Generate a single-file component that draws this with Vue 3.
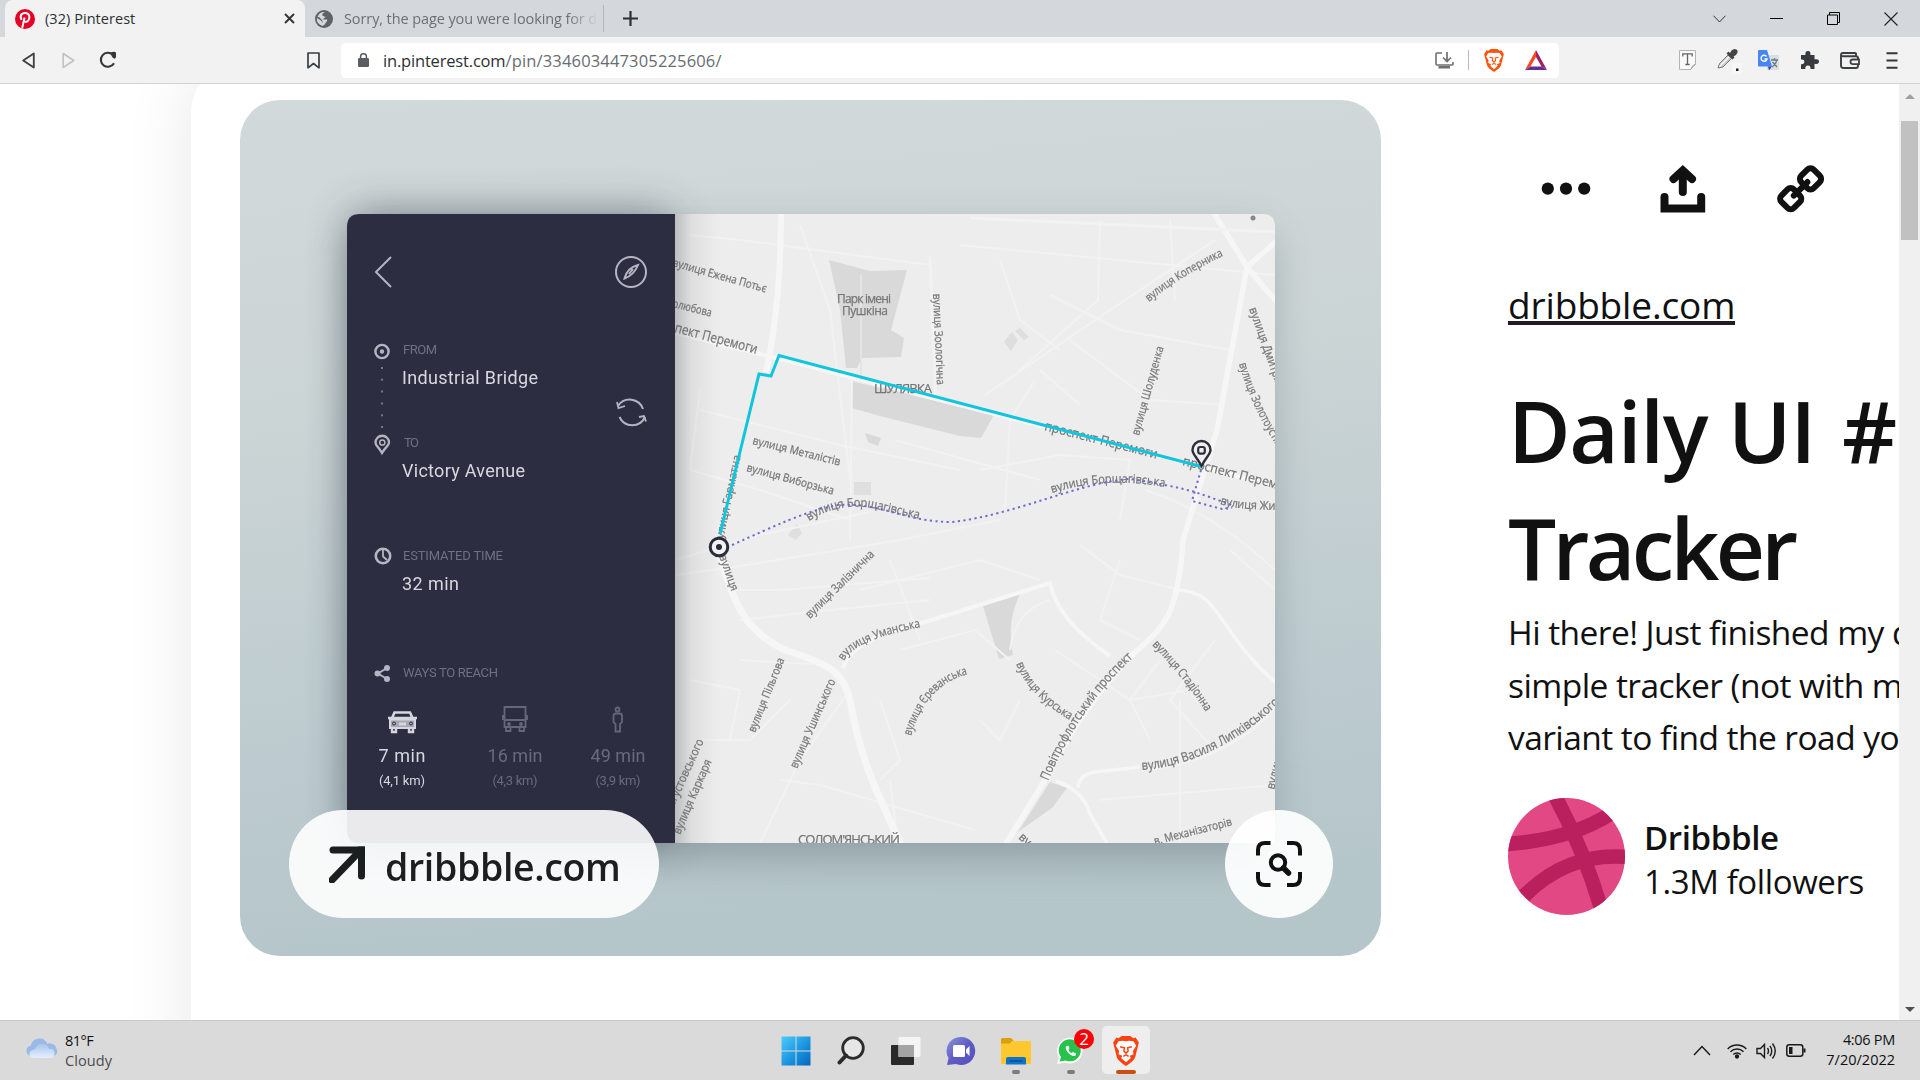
<script setup>
const labels = [
  { t: 'вулиця Ежена Потьє', d: 'M672 266 L767 293', s: 11.5, l: 97 },
  { t: 'олюбова', d: 'M672 307 L712 317', s: 11.5, l: 40 },
  { t: 'пект Перемоги', d: 'M674 332 L757 354', s: 14, l: 85 },
  { t: 'вулиця Зоологічна', d: 'M933 294 L937 386', s: 11.5, l: 91 },
  { t: 'вулиця Металістів', d: 'M752 444 L841 466', s: 11.5, l: 90 },
  { t: 'вулиця Виборзька', d: 'M746 471 L834 495', s: 11.5, l: 90 },
  { t: 'вулиця Борщагівська', d: 'M809 521 Q838 502 872 508 L920 519', s: 12, l: 114 },
  { t: 'вулиця Гарматна', d: 'M722 545 L741 455', s: 11.5, l: 91 },
  { t: 'вулиця', d: 'M719 556 L732 593', s: 11.5, l: 38 },
  { t: 'вулиця Коперника', d: 'M1149 302 Q1180 276 1225 255', s: 11.5, l: 88 },
  { t: 'вулиця Шолуденка', d: 'M1139 436 L1164 346', s: 11.5, l: 92 },
  { t: 'вулиця Дмитрівська', d: 'M1249 309 L1285 410', s: 12, l: 105 },
  { t: 'вулиця Золотоустівська', d: 'M1239 364 Q1252 412 1290 466', s: 12, l: 112 },
  { t: 'проспект Перемоги', d: 'M1044 430 L1158 459', s: 13, l: 116 },
  { t: 'проспект Перемоги', d: 'M1182 465 L1298 494', s: 13, l: 118 },
  { t: 'вулиця Жилянська', d: 'M1220 504 Q1240 512 1320 509', s: 12, l: 98 },
  { t: 'вулиця Борщагівська', d: 'M1052 493 Q1105 476 1165 487', s: 12, l: 114 },
  { t: 'вулиця Залізнична', d: 'M810 619 L876 554', s: 12, l: 91 },
  { t: 'вулиця Уманська', d: 'M844 661 Q854 640 921 627', s: 12, l: 86 },
  { t: 'вулиця Пільгова', d: 'M755 733 L785 659', s: 11.5, l: 79 },
  { t: 'вулиця Ушинського', d: 'M797 769 L836 680', s: 12, l: 96 },
  { t: 'вулиця Єреванська', d: 'M911 736 Q926 684 969 674', s: 12, l: 88 },
  { t: 'Августовського', d: 'M671 813 L704 741', s: 12, l: 79 },
  { t: 'вулиця Каркаря', d: 'M680 835 L712 761', s: 12, l: 80 },
  { t: 'вулиця Курська', d: 'M1016 664 Q1030 697 1070 720', s: 12, l: 79 },
  { t: 'Повітрофлотський проспект', d: 'M1048 781 Q1080 705 1135 656', s: 13, l: 151 },
  { t: 'вулиця Стадіонна', d: 'M1152 645 Q1182 675 1206 712', s: 12, l: 86 },
  { t: 'вулиця Василя Липківського', d: 'M1142 770 Q1215 764 1281 702', s: 13, l: 156 },
  { t: 'в. Механізаторів', d: 'M1155 845 L1233 825', s: 11.5, l: 80 },
  { t: 'вулиця', d: 'M1274 790 L1284 752', s: 12, l: 38 },
  { t: 'вул.', d: 'M1018 838 L1035 854', s: 12, l: 22 },
]

const streets = [
  'M675 560 L760 535 L870 512', 'M675 575 L740 566 L900 540 L1000 520', 'M690 470 L760 490 L850 520',
  'M700 410 L840 445 L960 470', 'M735 590 L780 590 L930 578', 'M800 225 L830 310 L850 480',
  'M690 235 L740 240 L930 265', 'M700 390 L690 470', 'M852 380 L850 540', 'M895 440 L1040 480',
  'M985 395 L1110 310 L1215 240', 'M960 245 L1275 275', 'M1050 295 L1120 330 L1230 350',
  'M1035 380 L1010 420 L1005 510', 'M1000 260 L1020 320 L1060 350', 'M1100 220 L1098 300 L1020 370',
  'M1170 220 L1175 300', 'M980 470 L1060 455 L1130 460 L1120 520', 'M1070 340 L1150 400 L1225 405',
  'M1040 370 L1080 405', 'M1080 545 L1120 575 L1180 590', 'M1145 490 Q1210 510 1275 570',
  'M780 780 L820 785 L975 830', 'M760 843 L800 760 L850 690', 'M700 740 L750 740 L790 700',
  'M740 660 L830 665', 'M900 650 L975 630 L1010 660', 'M880 700 L900 760 L880 780',
  'M1010 650 Q1015 610 1050 600', 'M1020 700 L1000 740 L980 720', 'M1055 650 L1130 700 L1190 690',
  'M1150 740 L1130 700 L1160 660', 'M1180 700 L1180 843', 'M1215 640 L1170 700 L1210 745',
  'M1100 800 L1275 785', 'M1230 550 L1275 590', 'M690 680 L740 690 L730 740', 'M740 620 L830 610 L930 600',
  'M860 590 L980 560 L1040 580', 'M890 560 L920 640', 'M900 860 L890 780', 'M1120 560 L1100 620 L1140 640',
]

const ways = [
  { x: 402, time: '7 min', km: '(4,1 km)', on: true, tw: 47, kw: 46 },
  { x: 515, time: '16 min', km: '(4,3 km)', on: false, tw: 55, kw: 45 },
  { x: 618, time: '49 min', km: '(3,9 km)', on: false, tw: 55, kw: 45 },
]
</script>

<template>
  <div class="screen">
    <header class="tabs">
      <div class="tab active">
        <svg class="fav" viewBox="0 0 20 20"><circle cx="10" cy="10" r="10" fill="#e60023"/><path d="M7.2 18.9 L9.6 8.5 M6.6 10.9 C3.8 5.5 8 3.6 10.8 4 C14.6 4.500 15.200 8.500 13.5 11.300 C12.200 13.500 9.600 13.200 8.900 11.700" fill="none" stroke="#fff" stroke-width="2"/></svg>
        <span class="t1">(32) Pinterest</span>
        <svg class="x" viewBox="0 0 11 11"><path d="M1 1 L10 10 M10 1 L1 10" stroke="#33373b" stroke-width="2"/></svg>
      </div>
      <div class="tab other">
        <svg class="fav2" viewBox="0 0 18 18"><circle cx="9" cy="9" r="9" fill="#5f6368"/><path d="M10 2 C6 4 7 6 9.500 6.500 C12 7 8 8.500 8 9.500 H12 C13 11 11 12 10.500 13 C10 15 8 15.500 7.500 16 A7.300 7.300 0 0 1 1.800 8 L6 10.500 L8 13 L7 10 L4 7 L2.500 7.200 A7.200 7.200 0 0 1 10 2Z" fill="#d4d8dc"/></svg>
        <span class="t2">Sorry, the page you were looking for d</span>
      </div>
      <svg class="plus" viewBox="0 0 15 15"><path d="M7.500 0 V15 M0 7.500 H15" stroke="#2c3034" stroke-width="2.200"/></svg>
      <div class="winctl">
        <i><svg width="13" height="8" viewBox="0 0 13 8"><path d="M.5 .7 L6.500 7 L12.500 .7" fill="none" stroke="#333"/></svg></i>
        <i><svg width="13" height="13" viewBox="0 0 13 13"><path d="M0 6.500 H13" stroke="#000"/></svg></i>
        <i><svg width="13" height="13" viewBox="0 0 13 13"><path d="M.5 3 H10.500 V12.500 H.5Z M2.500 3 V.5 H12.500 V10.500 H10.500" fill="none" stroke="#000"/></svg></i>
        <i><svg width="14" height="14" viewBox="0 0 14 14"><path d="M.5 .5 L13.500 13.500 M13.500 .5 L.5 13.500" stroke="#222" stroke-width="1.100"/></svg></i>
      </div>
    </header>

    <nav class="toolbar">
      <div class="nav">
        <i><svg width="13" height="17" viewBox="0 0 13 17"><path d="M11.800 1.500 V15.500 L1.200 8.500Z" fill="none" stroke="#3b3f43" stroke-width="1.800" stroke-linejoin="round"/></svg></i>
        <i><svg width="13" height="17" viewBox="0 0 13 17"><path d="M1.200 1.500 V15.500 L11.800 8.500Z" fill="none" stroke="#c0c2c4" stroke-width="1.600" stroke-linejoin="round"/></svg></i>
        <i><svg width="18" height="18" viewBox="0 0 18 18"><path d="M15 12.200 A7 7 0 1 1 13.800 3.800" fill="none" stroke="#33373b" stroke-width="2.100"/><path d="M11 1.800 Q16.500 -.5 17 2 V6 Q16 9 13.500 6.500Z" fill="#33373b"/></svg></i>
      </div>
      <svg class="book" viewBox="0 0 13 17"><path d="M1 1 H12 V15.800 L6.500 11.500 L1 15.800Z" fill="none" stroke="#3b3f43" stroke-width="1.700" stroke-linejoin="round"/></svg>
      <div class="url">
        <svg class="lock" viewBox="0 0 11 14"><rect y="5" width="11" height="9" rx="1.200" fill="#5a5e63"/><path d="M2.600 6 V3.500 a2.900 2.700 0 0 1 5.800 0 V6" fill="none" stroke="#5a5e63" stroke-width="1.500"/></svg>
        <span class="addr">in.pinterest.com<b>/pin/334603447305225606/</b></span>
        <svg class="dl" viewBox="0 0 19 17"><path d="M7 1 H1.800 Q1 1 1 2 V12 Q1 13 2 13 H17 Q18 13 18 12 V10" fill="none" stroke="#6d6f72" stroke-width="1.600"/><path d="M3.500 14 H15 V16.500 H3.500Z" fill="#6d6f72"/><path d="M12 0 V8.500 M8 5.500 L12 9.500 L16 5.500" fill="none" stroke="#6d6f72" stroke-width="1.700"/></svg>
        <span class="sep"></span>
        <svg class="brave" viewBox="0 0 24 28"><path d="M5 2 L8 0 H16 L19 2 L21 1.500 L24 6 L23 10 L20.500 20 Q19.500 23 12 28 Q4.500 23 3.500 20 L1 10 L0 6 L3 1.500Z" fill="#fb5410"/><path d="M5 5 L9 4.500 L12 5 L15 4.500 L19 5 L21.500 9 L18.500 14 L19 17 L15.500 18.500 L16.500 20.500 L12 24.500 L7.500 20.500 L8.500 18.500 L5 17 L5.500 14 L2.500 9Z" fill="#fff"/><path d="M6.500 10 L10.500 11 L10 14 L12 16 L14 14 L13.500 11 L17.500 10 M9.500 19 L12 17.500 L14.500 19" fill="none" stroke="#fb5410" stroke-width="1.400"/></svg>
        <svg class="bat" viewBox="0 0 22 20"><path d="M11 0 L0 20 L5.500 16.500 L11 7Z" fill="#ff4724"/><path d="M11 0 L22 20 L16.500 16.500 L11 7Z" fill="#9e1f63"/><path d="M0 20 L5.500 16.500 H16.500 L22 20Z" fill="#662d91"/></svg>
      </div>
      <div class="ext">
        <i><svg width="17" height="20" viewBox="0 0 17 20"><path d="M.5 .5 H16.500 V14 L11.500 19.500 H.5Z" fill="#fafafa" stroke="#b4b4b4"/><path d="M11.500 19.500 Q13 15 16.500 14Z" fill="#ddd" stroke="#999" stroke-width=".6"/><path d="M3.800 6.500 V3.900 H13.200 V6.500 M8.500 3.700 V14.500 M6.300 14.500 H10.700" fill="none" stroke="#666" stroke-width="1.300"/></svg></i>
        <i><svg width="28" height="28" viewBox="0 0 28 28"><path d="M4 22 L5.500 17.500 L14 9 L17.500 12.500 L9 21Z" fill="#ccc" stroke="#777"/><path d="M5.500 20.500 L15 11" stroke="#fff" stroke-width="1.200"/><path d="M12.500 7.500 L18.500 13.500 L20.500 11.500 L19.500 10.500 L22 9 Q25 5.500 22.500 3.500 Q20 2 17.500 4.500 L16 7 L14.500 5.500Z" fill="#444"/><rect x="18" y="17" width="10" height="11" fill="#f7f7f7"/><rect x="22" y="22.500" width="2.500" height="2.500" fill="#222"/></svg></i>
        <i><svg width="21" height="21" viewBox="0 0 21 21"><rect x="9" y="5" width="12" height="15" rx="1" fill="#dcdfe2"/><path d="M13 10 H20 M16.500 8 V10 M14 17 Q18.500 14 18.500 10 M14.500 12 L19 17" fill="none" stroke="#5f7d8c" stroke-width="1.300"/><path d="M1 0 H9 L14 16.500 H1 Q0 16.500 0 15.500 V1 Q0 0 1 0Z" fill="#4786f5"/><path d="M10 16.500 H14 L11 20.500Z" fill="#3949ab"/><path d="M8.500 6.500 A3 3 0 1 0 9 9 H6.500" fill="none" stroke="#fff" stroke-width="1.400"/></svg></i>
        <i><svg width="19" height="19" viewBox="0 0 19 19"><path d="M1 4 H5.500 Q4.800 0 8 0 Q11 0 10.300 4 H14.500 V8.300 Q19 7.500 19 10.500 Q19 13.700 14.500 12.700 V18 H10.500 Q10.800 14.600 8 14.600 Q5 14.600 5.300 18 H1 V13.200 Q4.400 13.500 4.400 10.800 Q4.400 8 1 8.500Z" fill="#363a3f"/></svg></i>
        <i><svg width="20" height="17" viewBox="0 0 20 17"><path d="M16 4 V2 Q16 1 15 1 H3 Q1 1 1 3 V13.500 Q1 16 3.500 16 H16 Q18 16 18 14 V6 Q18 4.200 16 4.200 H3 Q1 4 1 3" fill="none" stroke="#3b3f43" stroke-width="1.900"/><path d="M19 7.500 H13 Q10.500 7.500 10.500 9.800 Q10.500 12.200 13 12.200 H19Z" fill="#f2f2f2" stroke="#3b3f43" stroke-width="1.800"/></svg></i>
        <i><svg width="12" height="17" viewBox="0 0 12 17"><path d="M.5 1.200 H11.500 M.5 8.500 H11.500 M.5 15.700 H11.500" stroke="#33373b" stroke-width="1.900"/></svg></i>
      </div>
    </nav>

    <main class="page">
      <div class="gutter"></div>
      <section class="closeup">
        <div class="picture">
          <svg class="art" width="1141" height="856" viewBox="240 100 1141 856">
            <defs>
              <linearGradient id="bg" x1="0" y1="0" x2=".12" y2="1">
                <stop offset="0" stop-color="#d1d9da"/><stop offset=".35" stop-color="#ccd5d6"/><stop offset=".7" stop-color="#bfccd0"/><stop offset="1" stop-color="#b5c6cb"/>
              </linearGradient>
              <linearGradient id="cast"><stop offset="0" stop-color="#60636b" stop-opacity=".34"/><stop offset=".4" stop-color="#60636b" stop-opacity=".1"/><stop offset="1" stop-color="#60636b" stop-opacity="0"/></linearGradient>
              <filter id="sh" x="-20%" y="-20%" width="140%" height="140%"><feGaussianBlur stdDeviation="20"/></filter>
              <clipPath id="mapclip"><path d="M675 214 H1263 Q1275 214 1275 226 V843 H675Z"/></clipPath>
            </defs>
            <rect x="240" y="100" width="1141" height="856" fill="url(#bg)"/>
            <rect x="350" y="232" width="920" height="626" rx="20" fill="#5b6a70" opacity=".44" filter="url(#sh)"/>
            <rect x="350" y="212" width="322" height="630" rx="16" fill="#3c4652" opacity=".5" filter="url(#sh)"/>
            <g clip-path="url(#mapclip)">
              <rect x="675" y="214" width="600" height="629" fill="#ededed"/>
              <g class="soft">
                <g fill="#d9d9d9">
                  <path d="M829 260 L870 271 L907 270 L891 330 L904 338 L901 357 L862 358 L857 368 L846 368 L840 310Z"/>
                  <path d="M851 381 L880 388 L920 391 L995 413 L981 438 L960 436 L880 416 L852 408Z"/>
                  <path d="M865 433 L881 438 L878 446 L868 442Z"/>
                  <path d="M854 482 h17 v13 h-17Z" opacity=".7"/>
                  <path d="M788 535 L797 524 L802 533 L796 540Z" opacity=".7"/>
                  <path d="M983 606 L1020 594 Q1006 622 1013 655 L999 659Z"/>
                  <path d="M1050 782 L1067 788 L1052 808 L1018 832Z"/>
                  <path d="M1004 342 L1012 332 L1018 340 L1011 351Z M1015 331 L1020 328 L1029 337 L1024 340Z" opacity=".8"/>
                </g>
                <path v-for="(p, i) in streets" :key="i" :d="p" fill="none" stroke="#f2f2f2" stroke-width="2"/>
                <g fill="none" stroke="#f6f6f6" stroke-linejoin="round">
                  <path d="M781 200 Q782 300 766 372" stroke-width="6"/>
                  <path d="M719 552 C735 610 748 632 785 650 C832 665 842 672 850 700 C862 770 882 800 903 850" stroke-width="7"/>
                  <path d="M843 668 Q850 640 925 622 L1050 583 Q1057 620 1110 656" stroke-width="4"/>
                  <path d="M1212 210 L1247 267 L1280 306 M1280 238 L1247 267 L1217 430 L1183 540 C1178 620 1162 628 1132 655 Q1080 710 1045 780 L1005 845" stroke-width="5.500"/>
                  <path d="M1175 590 C1222 590 1215 630 1277 684 M1140 767 L1095 772 Q1078 775 1078 788 M1056 781 Q1083 790 1090 814 L1108 845" stroke-width="3.500"/>
                  <path d="M675 333 L776 358 L1201 467 L1280 487" stroke-width="4"/>
                  <path d="M1280 702 Q1230 762 1142 770 M930 257 L936 400 M970 218 L1275 232" stroke="#f2f2f2" stroke-width="3"/>
                  <path d="M861 275 V380" stroke="#e4e4e4" stroke-width="2"/>
                </g>
                <g class="lbl">
                  <template v-for="(l, i) in labels" :key="i">
                    <path :id="'street' + i" :d="l.d" fill="none" stroke="none"/>
                    <text :font-size="l.s" :textLength="l.l" lengthAdjust="spacingAndGlyphs"><textPath :href="'#street' + i" :textLength="l.l" lengthAdjust="spacingAndGlyphs">{{ l.t }}</textPath></text>
                  </template>
                  <text x="837" y="303" font-size="12" textLength="54">Парк імені</text>
                  <text x="842" y="315" font-size="12" textLength="46">Пушкіна</text>
                  <text x="874" y="393" font-size="13" textLength="58">ШУЛЯВКА</text>
                  <text x="798" y="844" font-size="13" textLength="102">СОЛОМ'ЯНСЬКИЙ</text>
                </g>
                <circle cx="1253" cy="218" r="2.500" fill="#888"/>
              </g>
              <rect x="675" y="214" width="42" height="629" fill="url(#cast)"/>
              <g class="soft">
                <path d="M732 545 C775 526 805 511 838 505 C880 502 905 522 952 522 C1015 515 1080 482 1130 479 Q1165 484 1195 492 L1232 505 M1201 470 L1192 501 L1222 509 L1232 508" fill="none" stroke="#7069cf" stroke-width="2" stroke-dasharray="2.200 3.400"/>
                <path d="M720 534 L759 374 L771 376 L779 355.500 L1201 466.500" fill="none" stroke="#12c5de" stroke-width="3"/>
                <circle cx="719" cy="547" r="8.800" fill="#f2f2f2" stroke="#2b2b3c" stroke-width="3"/><circle cx="719" cy="547" r="3" fill="#2b2b3c"/>
                <path d="M1201.500 466 C1196 456 1192.500 454 1192.500 450 A9 9 0 0 1 1210.500 450 C1210.500 454 1207 456 1201.500 466Z" fill="#efefef" stroke="#2f2f3b" stroke-width="2.400"/><rect x="1198.200" y="447" width="6.600" height="6.600" rx="2" fill="none" stroke="#2f2f3b" stroke-width="2.200"/>
              </g>
            </g>
            <path d="M675 214 H360 Q347 214 347 227 V830 Q347 843 360 843 H675Z" fill="#2d2d41"/>
            <g class="soft" fill="none" stroke="#b5b5c2" stroke-width="2">
              <path d="M391 257 L376 272 L391 287"/>
              <circle cx="631" cy="272" r="15"/><path d="M638 265 Q634 275 624.500 278.500 Q627 268 638 265Z M629 274 L633 269"/>
              <circle cx="382" cy="351.500" r="6.600" stroke-width="2.400"/><circle cx="382" cy="351.500" r="1.200" fill="#b5b5c2"/>
              <path d="M382 367 V430" stroke="#77778a" stroke-dasharray="2 9.800"/>
              <path d="M382 453 C378 446 375.500 446 375.500 442.500 A6.700 6.700 0 0 1 389 442.500 C389 446 386 446 382 453Z" stroke-width="2.300"/><circle cx="382.300" cy="442.500" r="2.600" stroke-width="1.500"/>
              <path d="M618 406 A14 14 0 0 1 643 409 M645 417 A14 14 0 0 1 619.500 417"/>
              <path d="M617 402 L618.500 408 L625 406 M639 417 L644 416 L646 421.500" stroke-width="1.800"/>
              <circle cx="383" cy="556" r="7.200" stroke-width="2.600"/><path d="M383 550 V556.500 L387 560" stroke-width="1.800"/>
              <path d="M387 668 L378 673.500 L387 679"/><g fill="#b5b5c2" stroke="none"><circle cx="387" cy="668" r="3"/><circle cx="377.500" cy="673.500" r="3"/><circle cx="387" cy="679" r="3"/></g>
            </g>
            <g class="soft panel">
              <text class="cap" x="403" y="354" textLength="34">FROM</text>
              <text class="val" x="402" y="384" textLength="136">Industrial Bridge</text>
              <text class="cap" x="404" y="446.500" textLength="15">TO</text>
              <text class="val" x="402" y="477" textLength="123">Victory Avenue</text>
              <text class="cap" x="403" y="560" textLength="100">ESTIMATED TIME</text>
              <text class="val" x="402" y="590" textLength="57">32 min</text>
              <text class="cap" x="403" y="677" textLength="95">WAYS TO REACH</text>
              <g fill="none" stroke="#d6d6de" stroke-width="2">
                <path d="M392 718 L394.500 712.500 H410 L412.500 718 M388 718 H417" stroke-width="2.600"/>
                <path d="M390 719.500 H415 V728 H390Z" fill="#a6a6b4"/><path d="M392 729 V732 H396 V729 M409 729 V732 H413 V729" stroke-width="2.400"/><circle cx="394" cy="723.500" r="1.500" stroke="#2d2d41" stroke-width="1"/><circle cx="411" cy="723.500" r="1.500" stroke="#2d2d41" stroke-width="1"/><path d="M399 724 H406" stroke-width="3"/>
              </g>
              <g fill="none" stroke="#66667a" stroke-width="1.800">
                <path d="M504.500 707 H525.500 V727 H504.500Z M504.500 720 H525.500 M503 715 V720 M527 715 V720 M506 728 V731 H510.500 V728 M519.500 728 V731 H524 V728"/><circle cx="509" cy="724" r="1"/><circle cx="521" cy="724" r="1"/>
                <circle cx="617.500" cy="709.500" r="2"/><path d="M613.500 716 Q613.500 713.500 616 713.500 H619.500 Q622 713.500 622 716 V722 L620 724 V731.500 H615.500 V724 L613.500 722Z"/>
              </g>
              <g v-for="w in ways" :key="w.time" :class="{ dim: !w.on }" text-anchor="middle">
                <text class="val" :x="w.x" y="762" :textLength="w.tw">{{ w.time }}</text>
                <text class="km" :x="w.x" y="785" :textLength="w.kw">{{ w.km }}</text>
              </g>
            </g>
          </svg>
          <div class="pill">
            <svg width="37" height="37" viewBox="0 0 37 37"><path d="M3 34 L30 6 M4 4 H32.500 V30" fill="none" stroke="#1c1f1f" stroke-width="7" stroke-linecap="round"/><path d="M29 .5 H36 V8Z" fill="#1c1f1f"/></svg>
            <span>dribbble.com</span>
          </div>
          <div class="lens">
            <svg width="46" height="46" viewBox="0 0 46 46" fill="none" stroke="#111"><path d="M2 14.500 V9 Q2 2 9 2 H14.500 M31 2 H37 Q44 2 44 9 V14.500 M44 31 V37 Q44 44 37 44 H31 M14.500 44 H9 Q2 44 2 37 V31" stroke-width="4"/><circle cx="22" cy="21.500" r="7.200" stroke-width="4"/><path d="M27.500 27 L32.500 32" stroke-width="5.500" stroke-linecap="round"/></svg>
          </div>
        </div>

        <aside class="info">
          <div class="actions">
            <svg width="50" height="50" viewBox="0 0 50 50"><g fill="#111"><circle cx="6.800" cy="24.600" r="6.100"/><circle cx="25" cy="24.600" r="6.100"/><circle cx="43.200" cy="24.600" r="6.100"/></g></svg>
            <svg width="46" height="50" viewBox="0 0 46 50" fill="none" stroke="#111" stroke-width="8" stroke-linecap="round" stroke-linejoin="round"><path d="M4.500 33 V44.500 H41.200 V33" stroke-linejoin="miter"/><path d="M22.800 8 V28" /><path d="M13.500 15 L22.800 6.500 L32 15" stroke-linejoin="miter"/></svg>
            <svg width="50" height="50" viewBox="0 0 50 50" fill="none" stroke="#111"><g transform="rotate(-45 24.600 24.800)" stroke-width="6"><rect x="1.800" y="16" width="17.600" height="17.600" rx="4.500"/><rect x="29.800" y="16" width="17.600" height="17.600" rx="4.500"/><path d="M15 24.800 H34.200" stroke-width="6" stroke-linecap="round"/></g></svg>
          </div>
          <a class="link"><span>dribbble.com</span></a>
          <h1>Daily UI <span>#020</span><br><em>Tracker</em></h1>
          <p><span>Hi there! Just finished my d</span><br><span>simple tracker (not with m</span><br><span>variant to find the road you</span></p>
          <div class="author">
            <svg width="117" height="117" viewBox="0 0 117 117"><defs><clipPath id="av"><circle cx="58.500" cy="58.500" r="58.500"/></clipPath></defs><g clip-path="url(#av)"><rect width="117" height="117" fill="#e24884"/><path d="M46 -4 Q75 50 93 110 M-2 46 Q62 42 104 15 M16 98 Q60 54 119 59" fill="none" stroke="#ba1f5e" stroke-width="14.500"/></g></svg>
            <div><b>Dribbble</b><span>1.3M followers</span></div>
          </div>
        </aside>
      </section>
      <div class="scroll">
        <svg width="10" height="5" viewBox="0 0 10 5"><path d="M0 5 L5 0 L10 5Z" fill="#a0a0a0"/></svg>
        <div class="thumb"></div>
        <svg class="down" width="10" height="5" viewBox="0 0 10 5"><path d="M0 0 H10 L5 5Z" fill="#505050"/></svg>
      </div>
    </main>

    <footer class="taskbar">
      <div class="weather">
        <svg width="32" height="24" viewBox="0 0 32 24"><defs><linearGradient id="cl" x1="0" y1="0" x2="0" y2="1"><stop offset="0" stop-color="#a9c4ec"/><stop offset="1" stop-color="#e4efff"/></linearGradient></defs><path d="M7 20 Q0 20 .5 14 Q1 10 5 9.500 Q6 3 13 2.500 Q19 2 21.500 8 Q23 6.500 26.500 8 Q30 9 30 12 Q32 14 31 17 Q30 20 26 20Z" fill="#9bb9e6"/><path d="M9 22 Q3 22 3.500 17 Q5 13 9 13.500 Q11 7 17 8 Q22 8.500 23 13 Q28 12 28.500 17 Q28.500 22 24 22Z" fill="url(#cl)"/></svg>
        <div><span>81°F</span><span class="c">Cloudy</span></div>
      </div>
      <div class="apps">
        <i><svg width="30" height="30" viewBox="0 0 30 30"><defs><linearGradient id="w" x1="0" y1="0" x2="1" y2="1"><stop offset="0" stop-color="#4ccdfd"/><stop offset=".6" stop-color="#168fdc"/><stop offset="1" stop-color="#0567bd"/></linearGradient></defs><path d="M.5 .5 H14.500 V14.500 H.5Z M15.500 .5 H29.500 V14.500 H15.500Z M.5 15.500 H14.500 V29.500 H.5Z M15.500 15.500 H29.500 V29.500 H15.500Z" fill="url(#w)"/></svg></i>
        <i><svg width="28" height="30" viewBox="0 0 28 30"><circle cx="16" cy="12" r="10.300" fill="#e6e6e6" stroke="#2b2b2b" stroke-width="2.800"/><path d="M9 19.500 L2.500 26.500" stroke="#2b2b2b" stroke-width="4" stroke-linecap="round"/></svg></i>
        <i><svg width="30" height="30" viewBox="0 0 30 30"><rect y="9" width="23" height="20" rx="1" fill="#2a2a2a"/><rect x="7.500" y="1" width="22" height="20" rx="1" fill="#f5f5f5" opacity=".95"/><rect x="7.500" y="9" width="15.500" height="12" fill="#a4a4a4"/></svg></i>
        <i><svg width="30" height="30" viewBox="0 0 30 30"><defs><linearGradient id="tm" x1="0" y1="0" x2="1" y2="1"><stop offset="0" stop-color="#8a93d8"/><stop offset=".5" stop-color="#5f5cc4"/><stop offset="1" stop-color="#5350bf"/></linearGradient></defs><path d="M15 1 A14 14 0 1 1 10 28 L1 29 L2.500 22 A14 14 0 0 1 15 1Z" fill="url(#tm)"/><rect x="7" y="9" width="12" height="12" rx="1.500" fill="#fff"/><path d="M20 13.500 L23.500 10 V20 L20 16.500Z" fill="#fff"/></svg></i>
        <i><svg width="30" height="30" viewBox="0 0 30 30"><path d="M0 3.500 Q0 2 1.500 2 H10 L13 5 H11 L9 8 H0Z" fill="#dd9f08"/><path d="M0 7.500 H9 L12 5 H29 Q30 5 30 6 V28 H0Z" fill="#fdc82f"/><path d="M5 28.500 V23 Q5 21 7 21 H23 Q25 21 25 23 V28.500Z" fill="#1272c9"/><path d="M8.500 25 H21.500" stroke="#0b4f96" stroke-width="1.500"/></svg><u></u></i>
        <i><svg width="40" height="40" viewBox="0 0 40 40"><path d="M6 33 L8 26.500 A12.800 12.800 0 1 1 14 31.500Z" fill="#fff"/><path d="M8.500 30.500 L10 26 A11 11 0 1 1 14.500 29.500Z" fill="#26c24b"/><path d="M15 15.500 Q14 17.500 16.500 21 Q20 25.500 24 25 Q25.500 23.500 25 22.500 L22 21 L20.500 22 Q18 21 17.500 18.500 L18.500 17.500 L17.500 14.500Z" fill="#fff"/></svg><em>2</em><u></u></i>
        <i class="on"><svg width="26" height="30" viewBox="0 0 24 28"><path d="M5 2 L8 0 H16 L19 2 L21 1.500 L24 6 L23 10 L20.500 20 Q19.500 23 12 28 Q4.500 23 3.500 20 L1 10 L0 6 L3 1.500Z" fill="#fb4210"/><path d="M5 5 L9 4.500 L12 5 L15 4.500 L19 5 L21.500 9 L18.500 14 L19 17 L15.500 18.500 L16.500 20.500 L12 24.500 L7.500 20.500 L8.500 18.500 L5 17 L5.500 14 L2.500 9Z" fill="#fff"/><path d="M6.500 10 L10.500 11 L10 14 L12 16 L14 14 L13.500 11 L17.500 10 M9.500 19 L12 17.500 L14.500 19" fill="none" stroke="#fb4210" stroke-width="1.400"/></svg><u></u></i>
      </div>
      <div class="tray">
        <svg width="18" height="11" viewBox="0 0 18 11"><path d="M1 10 L9 1.500 L17 10" fill="none" stroke="#1b1b1b" stroke-width="1.500"/></svg>
        <svg class="wifi" width="20" height="16" viewBox="0 0 20 16" fill="none" stroke="#1b1b1b" stroke-width="1.500"><path d="M.7 6 A13 13 0 0 1 19.300 6 M3.500 8.700 A9.300 9.300 0 0 1 16.500 8.700 M6.300 11.500 A5.300 5.300 0 0 1 13.700 11.500"/><circle cx="10" cy="13.500" r="1.400" fill="#1b1b1b"/></svg>
        <svg class="vol" width="21" height="18" viewBox="0 0 21 18" fill="none" stroke="#1b1b1b" stroke-width="1.400"><path d="M1 6.500 H4.500 L8.500 2.500 V15.500 L4.500 11.500 H1Z M11.500 6 Q13.500 9 11.500 12 M14 3.800 Q17.500 9 14 14.200 M16.500 1.500 Q22 9 16.500 16.500"/></svg>
        <svg width="20" height="13" viewBox="0 0 20 13"><rect x=".8" y=".8" width="16" height="11.400" rx="2.500" fill="none" stroke="#1b1b1b" stroke-width="1.500"/><rect x="3" y="3" width="3.500" height="7" fill="#1b1b1b"/><path d="M17.500 4.500 H19.500 V8.500 H17.500Z" fill="#1b1b1b"/></svg>
        <div class="clock"><span>4:06 PM</span><span class="d">7/20/2022</span></div>
      </div>
    </footer>
  </div>
</template>

<style>
html, body { margin: 0; overflow: hidden; }
</style>

<style scoped>
.screen { width: 1920px; height: 1080px; display: flex; flex-direction: column; font-family: "Open Sans", "Noto Sans", sans-serif; color: #111; background: #fff; overflow: hidden; white-space: nowrap; }
svg { display: block; flex: none; }
i { font-style: normal; display: flex; align-items: center; justify-content: center; flex: none; }

.tabs { height: 37px; flex: none; background: #d4d8dc; display: flex; align-items: center; }
.tab { height: 37px; display: flex; align-items: center; box-sizing: border-box; font-size: 14.5px; }
.active { margin-left: 5px; width: 300px; padding-left: 10px; background: #f2f2f2; border-radius: 8px 8px 0 0; color: #2c3034; }
.fav { width: 20px; height: 20px; margin-right: 10px; }
.t1 { letter-spacing: .05px; }
.x { width: 11px; height: 11px; margin-left: auto; margin-right: 10px; }
.other { width: 299px; padding-left: 10px; border-right: 1px solid #b3b7ba; height: 27px; color: #6c7075; }
.fav2 { width: 18px; height: 18px; margin-right: 11px; }
.t2 { width: 254px; overflow: hidden; letter-spacing: -.1px; -webkit-mask-image: linear-gradient(90deg, #000 88%, transparent 100%); mask-image: linear-gradient(90deg, #000 88%, transparent 100%); }
.plus { width: 15px; height: 15px; margin-left: 19px; }
.winctl { display: flex; margin-left: auto; padding-right: 1px; }
.winctl i { width: 57px; height: 37px; }

.toolbar { height: 46px; flex: none; background: #f2f2f2; border-bottom: 1px solid #d3d3d3; display: flex; align-items: center; }
.nav { display: flex; padding-left: 8px; }
.nav i { width: 40px; height: 46px; }
.book { width: 13px; height: 17px; margin-left: 179px; }
.url { width: 1218px; height: 35px; box-sizing: border-box; margin-left: 21px; padding: 0 12px 0 17px; background: #fff; border-radius: 5px; display: flex; align-items: center; }
.lock { width: 11px; height: 14px; margin-right: 14px; }
.addr { font-size: 16.500px; color: #2c3034; flex: 1; letter-spacing: -.18px; }
.addr b { font-weight: 400; color: #686c70; letter-spacing: .16px; }
.dl { width: 19px; height: 17px; }
.sep { width: 1px; height: 20px; background: #bbb; margin: 0 15px 0 14px; }
.brave { width: 20px; height: 23px; margin-right: 21px; }
.bat { width: 22px; height: 20px; }
.ext { display: flex; margin-left: 108px; }
.ext i { width: 40.600px; height: 46px; }
.ext i:last-child { margin-left: 2px; }

.page { height: 936px; flex: none; display: flex; overflow: hidden; background: #fff; }
.gutter { width: 191px; flex: none; }
.closeup { width: 1708px; flex: none; box-sizing: border-box; margin-top: -20px; padding-top: 36px; height: 1100px; border-radius: 48px 0 0 0; background: #fff; box-shadow: 0 0 70px rgba(0, 0, 0, .095); display: flex; overflow: hidden; }
.picture { position: relative; width: 1141px; height: 856px; margin-left: 49px; border-radius: 40px; overflow: hidden; flex: none; }
.soft { filter: blur(.6px); }
.lbl { font-family: "Open Sans", "Noto Sans", sans-serif; fill: #767676; stroke: #767676; stroke-width: .25px; }
.panel { font-family: Roboto, sans-serif; }
.cap { font-size: 13px; fill: #707082; }
.val { font-size: 18px; fill: #d8d8e0; }
.km { font-size: 13px; fill: #d8d8e0; }
.dim .val, .dim .km { fill: #6a6a7d; }
.pill { position: absolute; left: 49px; top: 710px; width: 370px; height: 108px; box-sizing: border-box; padding-left: 40px; border-radius: 54px; background: rgba(255, 255, 255, .9); display: flex; align-items: center; color: #1c1f1f; }
.pill span { margin-left: 19px; font-size: 37.500px; font-weight: 600; letter-spacing: -.35px; line-height: 50px; padding-top: 5px; }
.lens { position: absolute; left: 985px; top: 710px; width: 108px; height: 108px; border-radius: 54px; background: rgba(255, 255, 255, .92); display: flex; align-items: center; justify-content: center; }

.info { margin-left: 127px; width: 391px; overflow: hidden; flex: none; padding-top: 64px; box-sizing: border-box; }
.actions { display: flex; padding-left: 33px; height: 50px; }
.actions svg:nth-child(2) { margin-left: 69px; }
.actions svg:nth-child(3) { margin-left: 70px; }
.link { display: block; margin-top: 69px; height: 44px; line-height: 43px; font-size: 37px; }
.link span { display: inline-block; height: 38px; border-bottom: 4px solid #221a22; letter-spacing: -.15px; }
h1 { margin: 45px 0 0; font-size: 85.500px; font-weight: 600; line-height: 117px; letter-spacing: -1.300px; }
h1 span { margin-left: 6px; }
h1 em { font-style: normal; letter-spacing: -3.700px; }
p { margin: 0; font-size: 33.500px; line-height: 52.600px; letter-spacing: -.56px; }
.author { margin-top: 34px; display: flex; align-items: center; }
.author div { margin-left: 19px; padding-top: 7px; display: flex; flex-direction: column; font-size: 33px; line-height: 44px; }
.author b { font-weight: 600; letter-spacing: -.35px; }
.author span { letter-spacing: -.4px; }

.scroll { width: 21px; flex: none; background: #f0f0f0; display: flex; flex-direction: column; align-items: center; padding-top: 10px; box-sizing: border-box; }
.thumb { width: 17px; height: 119px; margin-top: 22px; background: #c1c1c1; }
.down { margin-top: auto; margin-bottom: 8px; }

.taskbar { height: 60px; flex: none; box-sizing: border-box; border-top: 1px solid #c9c9c9; background: #dadada; display: flex; }
.weather { width: 768px; padding-left: 26px; box-sizing: border-box; display: flex; padding-top: 9px; font-size: 14.500px; line-height: 20px; }
.weather svg { margin-top: 6px; }
.weather div { margin-left: 7px; padding-top: 1px; display: flex; flex-direction: column; letter-spacing: -.5px; }
.c { color: #4c4c4c; letter-spacing: .1px; }
.apps { display: flex; width: 385px; }
.apps i { position: relative; width: 55px; height: 59px; }
.apps i::before { content: ""; position: absolute; }
.apps svg { position: relative; }
.apps u { position: absolute; left: 24px; bottom: 6px; width: 8px; height: 4px; border-radius: 2px; background: #7c7c7c; }
.apps em { position: absolute; left: 31px; top: 8px; width: 20px; height: 20px; border-radius: 10px; background: #fb0007; color: #fff; font: 17px/20px "Open Sans", sans-serif; text-align: center; }
.apps .on::before { left: 4px; top: 5px; width: 48px; height: 48px; border-radius: 5px; background: #eee; }
.apps .on u { left: 18px; width: 20px; background: #ca5010; }
.tray { margin-left: auto; padding-right: 25px; display: flex; align-items: center; }
.tray .wifi { margin-left: 16px; }
.tray .vol { margin: 0 9px; }
.clock { margin-left: 20px; margin-top: -1px; width: 69px; display: flex; flex-direction: column; align-items: flex-end; font-size: 14.500px; line-height: 20px; letter-spacing: -.3px; }
.d { letter-spacing: 0; }
</style>
